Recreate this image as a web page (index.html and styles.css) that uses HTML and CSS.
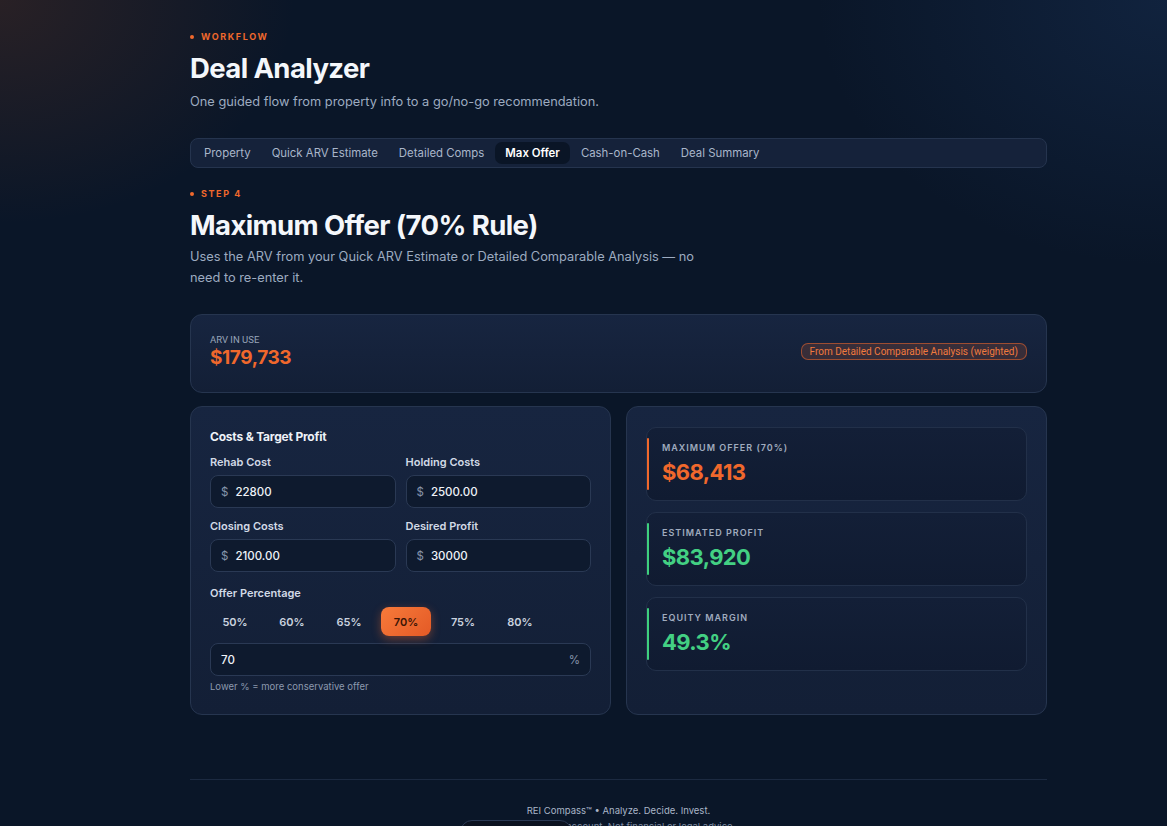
FILE: index.html
```html
<!DOCTYPE html>
<html lang="en">
<head>
    <meta charset="UTF-8">
    <meta name="viewport" content="width=device-width, initial-scale=1.0">
    <title>Deal Analyzer - REI Compass</title>
    <link rel="stylesheet" href="styles.css">
</head>
<body>
    <div class="container">
        <div class="eyebrow">Workflow</div>
        <h1>Deal Analyzer</h1>
        <p class="lead">One guided flow from property info to a go/no-go recommendation.</p>

        <nav class="tabs">
            <span class="tab">Property</span>
            <span class="tab">Quick ARV Estimate</span>
            <span class="tab">Detailed Comps</span>
            <span class="tab active">Max Offer</span>
            <span class="tab">Cash-on-Cash</span>
            <span class="tab">Deal Summary</span>
        </nav>

        <div class="eyebrow">Step 4</div>
        <h2>Maximum Offer (70% Rule)</h2>
        <p class="lead narrow">Uses the ARV from your Quick ARV Estimate or Detailed Comparable Analysis — no need to re-enter it.</p>

        <!-- ARV pulled from the previous steps -->
        <div class="card arv-card">
            <div>
                <div class="arv-label">ARV in use</div>
                <div class="arv-value">$179,733</div>
            </div>
            <span class="source-badge">From Detailed Comparable Analysis (weighted)</span>
        </div>

        <div class="columns">
            <div class="card form-card">
                <h3>Costs &amp; Target Profit</h3>
                <div class="field-grid">
                    <div class="field">
                        <label>Rehab Cost</label>
                        <div class="input"><span class="unit">$</span><span class="val">22800</span></div>
                    </div>
                    <div class="field">
                        <label>Holding Costs</label>
                        <div class="input"><span class="unit">$</span><span class="val">2500.00</span></div>
                    </div>
                    <div class="field">
                        <label>Closing Costs</label>
                        <div class="input"><span class="unit">$</span><span class="val">2100.00</span></div>
                    </div>
                    <div class="field">
                        <label>Desired Profit</label>
                        <div class="input"><span class="unit">$</span><span class="val">30000</span></div>
                    </div>
                </div>

                <label class="pct-label">Offer Percentage</label>
                <div class="presets">
                    <button>50%</button>
                    <button>60%</button>
                    <button>65%</button>
                    <button class="active">70%</button>
                    <button>75%</button>
                    <button>80%</button>
                </div>
                <div class="input pct-input"><span class="val">70</span><span class="unit">%</span></div>
                <div class="hint">Lower % = more conservative offer</div>
            </div>

            <div class="card results-card">
                <div class="metric orange">
                    <div class="metric-label">Maximum Offer (70%)</div>
                    <div class="metric-value">$68,413</div>
                </div>
                <div class="metric green">
                    <div class="metric-label">Estimated Profit</div>
                    <div class="metric-value">$83,920</div>
                </div>
                <div class="metric green">
                    <div class="metric-label">Equity Margin</div>
                    <div class="metric-value">49.3%</div>
                </div>
            </div>
        </div>

        <footer class="footer">
            <div>REI Compass™ • Analyze. Decide. Invest.</div>
            <div class="fine">Saved to your account. Not financial or legal advice.</div>
        </footer>
    </div>

    <div class="floating-pill"></div>
</body>
</html>
```

FILE: styles.css
```css
* {
    box-sizing: border-box;
}

body {
    font-family: Inter, 'Noto Sans', sans-serif;
    margin: 0;
    min-height: 100vh;
    color: #e6ecf5;
    background:
        radial-gradient(ellipse 420px 320px at 0 0, rgba(120, 60, 30, 0.28), transparent 70%),
        radial-gradient(ellipse 500px 380px at 100% 0, rgba(40, 80, 140, 0.22), transparent 70%),
        #0a1628;
    overflow: hidden;
}

.container {
    width: 857px;
    margin-left: 190px;
    padding-top: 31px;
}

.eyebrow {
    display: flex;
    align-items: center;
    gap: 7px;
    font-size: 9px;
    font-weight: 700;
    letter-spacing: 1.6px;
    text-transform: uppercase;
    color: #f0682c;
}

.eyebrow::before {
    content: '';
    width: 4px;
    height: 4px;
    border-radius: 50%;
    background: #f0682c;
}

h1, h2 {
    margin: 0;
    font-weight: 700;
    color: #f4f7fb;
    letter-spacing: -0.6px;
}

h1 {
    font-size: 27.5px;
    margin-top: 10px;
    line-height: 32px;
}

h2 {
    font-size: 27.5px;
    margin-top: 9px;
    line-height: 34px;
}

.lead {
    margin: 7px 0 0;
    font-size: 12.8px;
    line-height: 21px;
    color: #9dabc0;
}

.lead.narrow {
    max-width: 520px;
    margin-top: 4px;
}

.tabs {
    display: flex;
    align-items: center;
    gap: 1px;
    margin: 26px 0 20px;
    height: 30px;
    padding: 0 3px;
    background: #15223a;
    border: 1px solid #25344e;
    border-radius: 8px;
}

.tab {
    padding: 4px 10px;
    font-size: 11.4px;
    color: #a9b6ca;
    border-radius: 7px;
}

.tab.active {
    background: #0a1526;
    color: #ffffff;
    font-weight: 600;
}

.card {
    background: linear-gradient(180deg, #172540 0%, #131f36 100%);
    border: 1px solid #26354f;
    border-radius: 12px;
}

.arv-card {
    display: flex;
    align-items: center;
    justify-content: space-between;
    margin-top: 26px;
    height: 79px;
    padding: 0 19px 4px;
}

.arv-label {
    font-family: Roboto, sans-serif;
    font-size: 9.5px;
    color: #98a5ba;
    text-transform: uppercase;
}

.arv-value {
    font-size: 19px;
    font-weight: 700;
    color: #f0682c;
    letter-spacing: -0.4px;
    margin-top: 1px;
}

.source-badge {
    font-family: Roboto, sans-serif;
    font-size: 10px;
    color: #f07a3e;
    padding: 2px 8px;
    background: rgba(240, 104, 44, 0.16);
    border: 1px solid rgba(240, 104, 44, 0.55);
    border-radius: 7px;
}

.columns {
    display: grid;
    grid-template-columns: 1fr 1fr;
    gap: 15px;
    margin-top: 13px;
}

.form-card {
    padding: 20px 19px 22px;
}

h3 {
    margin: 2px 0 0;
    font-size: 12px;
    font-weight: 700;
    color: #eef2f8;
    letter-spacing: -0.2px;
}

.field-grid {
    display: grid;
    grid-template-columns: 1fr 1fr;
    gap: 11px 10px;
    margin-top: 11px;
}

label {
    display: block;
    font-size: 11px;
    font-weight: 600;
    color: #d2dae6;
    margin-bottom: 6px;
}

.input {
    display: flex;
    align-items: center;
    gap: 7px;
    height: 33px;
    padding: 0 10px;
    background: #0e1a2e;
    border: 1px solid #2a3954;
    border-radius: 8px;
    font-size: 11.5px;
}

.input .unit {
    color: #8795ab;
}

.input .val {
    color: #eef2f8;
    font-weight: 500;
}

.pct-label {
    margin-top: 14px;
    margin-bottom: 7px;
}

.presets {
    display: flex;
    gap: 7px;
}

.presets button {
    width: 50px;
    height: 29px;
    font-family: inherit;
    font-size: 11px;
    font-weight: 600;
    color: #c9d2df;
    background: transparent;
    border: none;
    border-radius: 8px;
    cursor: pointer;
}

.presets button.active {
    color: #3a1406;
    background: linear-gradient(135deg, #f77a3a 0%, #e45a26 100%);
    box-shadow: 0 3px 10px rgba(240, 104, 44, 0.4);
}

.pct-input {
    justify-content: space-between;
    margin-top: 7px;
}

.hint {
    margin-top: 5px;
    font-size: 9.5px;
    color: #8c99ae;
}

.results-card {
    display: flex;
    flex-direction: column;
    gap: 11px;
    padding: 20px 19px;
}

.metric {
    position: relative;
    height: 74px;
    padding: 14px 15px 0;
    background: linear-gradient(180deg, #131f37 0%, #101b31 100%);
    border: 1px solid #223049;
    border-radius: 10px;
}

/* coloured accent on the left edge */
.metric::before {
    content: '';
    position: absolute;
    left: 0;
    top: 10px;
    bottom: 10px;
    width: 2px;
    border-radius: 1px;
}

.metric.orange::before { background: #f0682c; }
.metric.green::before { background: #3ecf7e; }

.metric-label {
    font-size: 9px;
    font-weight: 600;
    letter-spacing: 1px;
    text-transform: uppercase;
    color: #a0acbf;
}

.metric-value {
    margin-top: 6px;
    font-size: 22px;
    font-weight: 700;
    letter-spacing: -0.6px;
}

.metric.orange .metric-value { color: #f0682c; }
.metric.green .metric-value { color: #43d083; }

.footer {
    margin-top: 64px;
    padding-top: 25px;
    border-top: 1px solid #1c2a41;
    text-align: center;
    font-size: 9.5px;
    color: #a9b5c7;
}

.footer .fine {
    margin-top: 5px;
    color: #7d8aa0;
}

.floating-pill {
    position: fixed;
    left: 460px;
    top: 820px;
    width: 112px;
    height: 24px;
    background: #0b1220;
    border: 1px solid #2a3954;
    border-radius: 12px;
}
```
